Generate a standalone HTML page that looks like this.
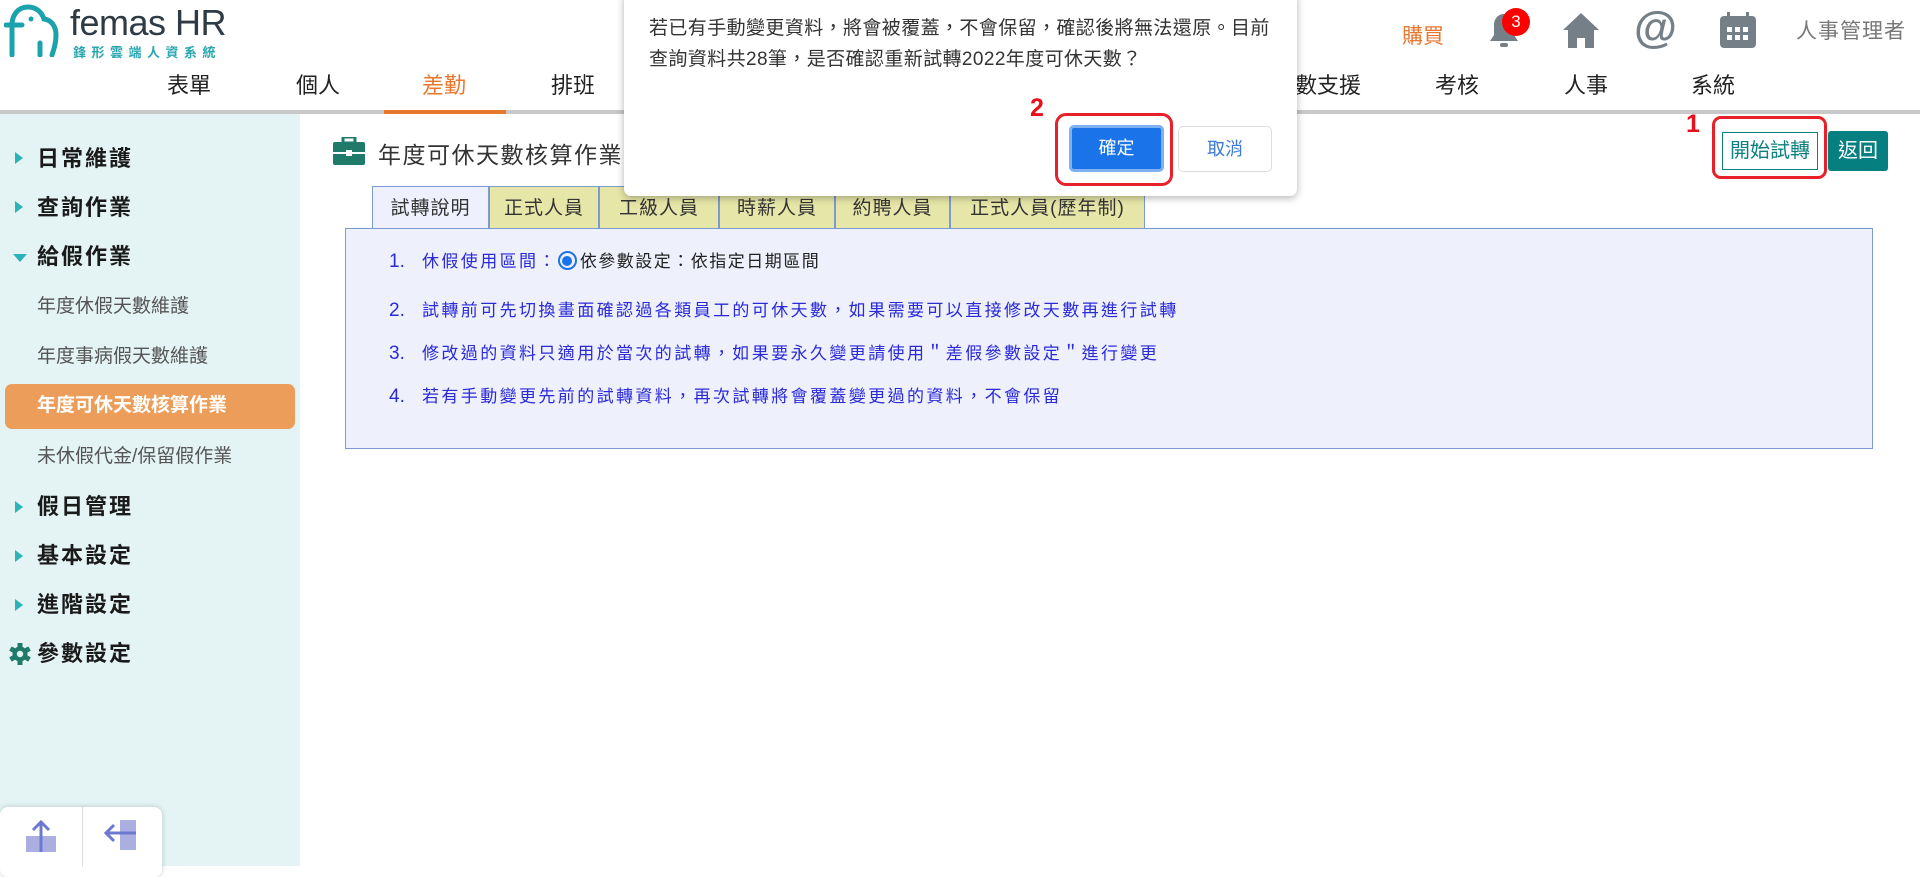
<!DOCTYPE html>
<html><head><meta charset="utf-8"><style>
*{margin:0;padding:0;box-sizing:border-box}
body{width:1920px;height:866px;overflow:hidden;background:#fff;font-family:"Liberation Sans","Noto Sans CJK TC",sans-serif;position:relative}
.a{position:absolute;white-space:nowrap}
.nav{top:72px;font-size:22px;color:#222;line-height:28px}
.side{background:#e4f4f4;position:absolute;left:0;top:114px;width:300px;height:752px}
.mi{position:absolute;left:37px;font-size:22px;color:#1a1a1a;line-height:28px;font-weight:bold;letter-spacing:2px}
.tri{position:absolute;left:15px;width:0;height:0;border-top:6px solid transparent;border-bottom:6px solid transparent;border-left:8px solid #2ab3b8}
.si{position:absolute;left:37px;font-size:19px;color:#555;line-height:26px}
.tab{position:absolute;top:186px;height:43px;border:1px solid #7b9bd0;border-bottom:none;background:#e6e6a8;font-size:19px;color:#333;text-align:center;line-height:44px;letter-spacing:1px}
.ln{position:absolute;left:389px;font-size:17px;color:#2a2ad8;letter-spacing:2.4px;line-height:22px}
.ln b{font-weight:normal;display:inline-block;width:33px;letter-spacing:0;font-size:19px}
</style></head><body>
<!-- header -->
<svg class="a" style="left:4px;top:3px" width="56" height="54" viewBox="0 0 56 54"><g fill="none" stroke="#1aa3ad" stroke-width="5" stroke-linecap="round"><path d="M8 52V22c0-10 6-18 16-18 9 0 14 6 16 12 8 1 12 8 12 16 0 8-2 14-4 20"/><path d="M2 22h16"/><path d="M36 40v12"/></g><circle cx="27" cy="16" r="2.5" fill="#1aa3ad"/></svg>
<div class="a" style="left:70px;top:2px;font-size:36px;color:#2e3a44;letter-spacing:-0.5px">femas HR</div>
<div class="a" style="left:73px;top:42px;font-size:13px;color:#2aa7b0;letter-spacing:5.5px;font-weight:bold">鋒形雲端人資系統</div>
<div class="a nav" style="left:167px">表單</div>
<div class="a nav" style="left:296px">個人</div>
<div class="a nav" style="left:422px;color:#e8772e">差勤</div>
<div class="a nav" style="left:551px">排班</div>
<div class="a nav" style="left:679px">加班</div>
<div class="a nav" style="left:807px">請假</div>
<div class="a nav" style="left:935px">出勤</div>
<div class="a nav" style="left:1063px">異常</div>
<div class="a nav" style="left:1229px">人力調數支援</div>
<div class="a nav" style="left:1435px">考核</div>
<div class="a nav" style="left:1564px">人事</div>
<div class="a nav" style="left:1691px">系統</div>
<div class="a" style="left:0;top:110px;width:1920px;height:4px;background:#c8c8c8"></div>
<div class="a" style="left:384px;top:110px;width:122px;height:4px;background:#e8772e"></div>
<div class="a" style="left:1402px;top:20px;font-size:21px;color:#e8772e">購買</div>
<svg class="a" style="left:1488px;top:12px" width="32" height="38" viewBox="0 0 32 38"><path d="M16 2c-6 0-10 5-10 11v10l-4 6h28l-4-6V13C26 7 22 2 16 2z" fill="#757f88"/><rect x="12" y="31" width="8" height="4" rx="2" fill="#757f88"/></svg>
<div class="a" style="left:1502px;top:8px;width:28px;height:28px;border-radius:50%;background:#f00;color:#fff;font-size:17px;text-align:center;line-height:28px">3</div>
<svg class="a" style="left:1562px;top:12px" width="38" height="36" viewBox="0 0 38 36"><path d="M19 1L1 18h5v18h9V26h8v10h9V18h5z" fill="#757f88"/></svg>
<div class="a" style="left:1634px;top:3px;font-size:44px;font-weight:bold;color:#757f88;line-height:50px">@</div>
<svg class="a" style="left:1719px;top:12px" width="38" height="36" viewBox="0 0 38 36"><rect x="1" y="4" width="36" height="32" rx="4" fill="#757f88"/><rect x="8" y="0" width="3" height="7" fill="#757f88"/><rect x="27" y="0" width="3" height="7" fill="#757f88"/><g fill="#fff"><rect x="8" y="15" width="5" height="5"/><rect x="16" y="15" width="5" height="5"/><rect x="24" y="15" width="5" height="5"/><rect x="8" y="23" width="5" height="5"/><rect x="16" y="23" width="5" height="5"/><rect x="24" y="23" width="5" height="5"/></g></svg>
<div class="a" style="left:1796px;top:15px;font-size:21px;color:#777;letter-spacing:1px">人事管理者</div>
<!-- sidebar -->
<div class="side"></div>
<div class="tri" style="top:152px"></div><div class="mi" style="top:145px">日常維護</div>
<div class="tri" style="top:201px"></div><div class="mi" style="top:194px">查詢作業</div>
<div class="a" style="left:13px;top:254px;border-left:7px solid transparent;border-right:7px solid transparent;border-top:8px solid #2ab3b8"></div><div class="mi" style="top:243px">給假作業</div>
<div class="si" style="top:294px">年度休假天數維護</div>
<div class="si" style="top:344px">年度事病假天數維護</div>
<div class="a" style="left:5px;top:384px;width:290px;height:45px;background:#ec9d5a;border-radius:7px"></div>
<div class="si" style="top:393px;color:#fff;font-weight:bold">年度可休天數核算作業</div>
<div class="si" style="top:444px">未休假代金/保留假作業</div>
<div class="tri" style="top:501px"></div><div class="mi" style="top:493px">假日管理</div>
<div class="tri" style="top:550px"></div><div class="mi" style="top:542px">基本設定</div>
<div class="tri" style="top:599px"></div><div class="mi" style="top:591px">進階設定</div>
<svg class="a" style="left:9px;top:643px" width="22" height="22" viewBox="0 0 22 22"><g fill="#1f7a6a"><circle cx="11" cy="11" r="7.5"/><g transform="translate(11 11)"><rect x="-2.5" y="-11" width="5" height="22"/><rect x="-2.5" y="-11" width="5" height="22" transform="rotate(60)"/><rect x="-2.5" y="-11" width="5" height="22" transform="rotate(120)"/></g></g><circle cx="11" cy="11" r="3.2" fill="#e4f4f4"/></svg>
<div class="mi" style="top:640px">參數設定</div>
<div class="a" style="left:0;top:807px;width:162px;height:70px;background:#fff;border-radius:8px;box-shadow:0 0 6px rgba(0,0,0,.2)"></div>
<div class="a" style="left:82px;top:807px;width:1px;height:59px;background:#ddd"></div>
<svg class="a" style="left:24px;top:818px" width="36" height="40" viewBox="0 0 36 40"><rect x="2" y="18" width="30" height="16" fill="#abaee0"/><path d="M17 34V4M9 12l8-8 8 8" stroke="#6d78d0" stroke-width="3" fill="none"/></svg>
<svg class="a" style="left:102px;top:818px" width="40" height="40" viewBox="0 0 40 40"><rect x="18" y="2" width="16" height="30" fill="#abaee0"/><path d="M34 15H4M12 7l-8 8 8 8" stroke="#6d78d0" stroke-width="3" fill="none"/></svg>
<!-- content -->
<svg class="a" style="left:333px;top:137px" width="32" height="28" viewBox="0 0 32 28"><rect x="10" y="0" width="12" height="6" rx="1" fill="none" stroke="#1f7a6a" stroke-width="3"/><rect x="0" y="5" width="32" height="23" rx="2" fill="#1f7a6a"/><rect x="0" y="15" width="32" height="2" fill="#fff"/><rect x="13" y="13" width="6" height="6" fill="#fff"/></svg>
<div class="a" style="left:378px;top:136px;font-size:23px;color:#333;letter-spacing:1.5px">年度可休天數核算作業</div>
<div class="a" style="left:1712px;top:116px;width:115px;height:63px;border:3px solid #e8202a;border-radius:9px"></div>
<div class="a" style="left:1722px;top:132px;width:96px;height:38px;border:1px solid #0d8080;background:#fff;color:#0d8080;font-size:20px;text-align:center;line-height:36px">開始試轉</div>
<div class="a" style="left:1828px;top:131px;width:60px;height:40px;background:#057f80;border-radius:3px;color:#fff;font-size:20px;text-align:center;line-height:40px">返回</div>
<div class="a" style="left:1686px;top:110px;font-size:25px;font-weight:bold;color:#e8101a">1</div>
<div class="tab" style="left:372px;width:117px;background:#eef0fe">試轉說明</div>
<div class="tab" style="left:489px;width:110px">正式人員</div>
<div class="tab" style="left:599px;width:120px">工級人員</div>
<div class="tab" style="left:719px;width:116px">時薪人員</div>
<div class="tab" style="left:835px;width:115px">約聘人員</div>
<div class="tab" style="left:950px;width:195px">正式人員(歷年制)</div>
<div class="a" style="left:345px;top:228px;width:1528px;height:221px;background:#eef0fc;border:1px solid #7b9bd0"></div>
<div class="ln" style="top:251px"><b>1.</b>休假使用區間：<span style="display:inline-block;width:19px;height:19px;border-radius:50%;border:2px solid #1a73e8;vertical-align:-3px;position:relative;margin-right:3px"><span style="position:absolute;left:2.5px;top:2.5px;width:10px;height:10px;border-radius:50%;background:#1a73e8"></span></span><span style="color:#222;letter-spacing:1.5px">依參數設定：依指定日期區間</span></div>
<div class="ln" style="top:300px"><b>2.</b>試轉前可先切換畫面確認過各類員工的可休天數，如果需要可以直接修改天數再進行試轉</div>
<div class="ln" style="top:343px"><b>3.</b>修改過的資料只適用於當次的試轉，如果要永久變更請使用＂差假參數設定＂進行變更</div>
<div class="ln" style="top:386px"><b>4.</b>若有手動變更先前的試轉資料，再次試轉將會覆蓋變更過的資料，不會保留</div>
<!-- dialog -->
<div class="a" style="left:624px;top:-8px;width:673px;height:204px;background:#fff;border-radius:7px;box-shadow:0 2px 8px rgba(0,0,0,.3)"></div>
<div class="a" style="left:649px;top:13px;font-size:19px;color:#333;line-height:31px;white-space:normal;width:630px;letter-spacing:0.4px">若已有手動變更資料，將會被覆蓋，不會保留，確認後將無法還原。目前查詢資料共28筆，是否確認重新試轉2022年度可休天數？</div>
<div class="a" style="left:1030px;top:94px;font-size:25px;font-weight:bold;color:#e8101a">2</div>
<div class="a" style="left:1055px;top:113px;width:118px;height:73px;border:3px solid #e8202a;border-radius:11px"></div>
<div class="a" style="left:1069px;top:125px;width:95px;height:47px;background:#1a73e8;border:3px solid #7fb0f2;border-radius:5px;color:#fff;font-size:18px;text-align:center;line-height:41px">確定</div>
<div class="a" style="left:1178px;top:126px;width:94px;height:46px;background:#fff;border:1px solid #ddd;border-radius:5px;color:#3a7bd5;font-size:18px;text-align:center;line-height:44px">取消</div>
</body></html>
